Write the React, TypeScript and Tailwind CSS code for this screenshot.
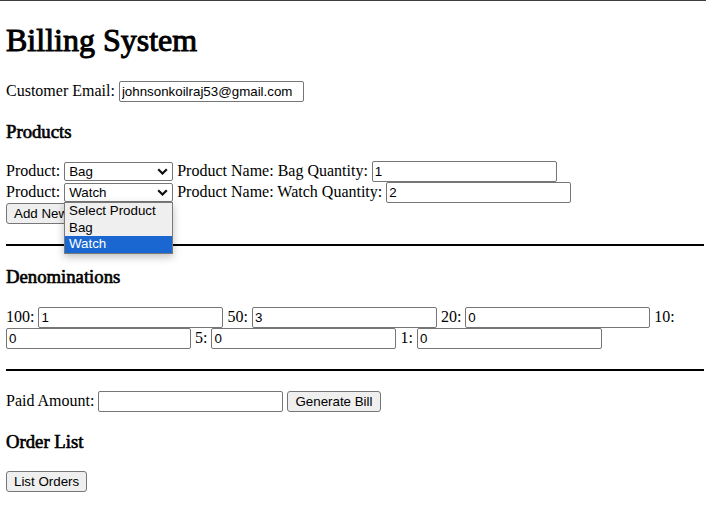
import React from "react";

const field =
  "inline-block align-baseline w-[185px] h-[21px] border border-[#767676] rounded-[2px] bg-white px-[2px] text-[13.333px] leading-[normal] text-black font-['Liberation_Sans',Arial,sans-serif]";

const btn =
  "inline-block align-baseline h-[21px] border border-[#767676] rounded-[3px] bg-[#efefef] px-[7px] text-[13.333px] leading-[normal] text-black font-['Liberation_Sans',Arial,sans-serif]";

// headings use regular glyph widths with a faux-bold stroke, like the screenshot
const h3 =
  "my-[18.72px] text-[18.72px] font-normal leading-[normal] [-webkit-text-stroke:0.65px_black]";

function ProductSelect({ value }: { value: string }) {
  return (
    <span className="relative inline-block align-baseline">
      <select
        value={value}
        onChange={() => {}}
        className="appearance-none block w-[109px] h-[19px] border border-[#767676] rounded-[2px] bg-white pl-[4px] text-[13.333px] leading-[normal] text-black font-['Liberation_Sans',Arial,sans-serif]"
      >
        <option value="">Select Product</option>
        <option value="Bag">Bag</option>
        <option value="Watch">Watch</option>
      </select>
      <svg
        className="pointer-events-none absolute right-[5px] top-[6px] w-[11px] h-[7px]"
        viewBox="0 0 11 7"
        fill="none"
        stroke="#111"
        strokeWidth={2.2}
      >
        <path d="M1.2 1.2l4.3 4.3 4.3-4.3" />
      </svg>
    </span>
  );
}

export default function App() {
  const denoms = [
    { label: "100", value: "1" },
    { label: "50", value: "3" },
    { label: "20", value: "0" },
    { label: "10", value: "0" },
    { label: "5", value: "0" },
    { label: "1", value: "0" },
  ];

  return (
    <div className="min-h-[529px] bg-white text-black font-['Liberation_Serif','Times_New_Roman',serif] text-[16px] leading-[normal]">
      <div className="h-px bg-[#3c3c3c]" />
      <div className="pl-[6px] pr-[2px] pb-[8px]">
        <h1 className="my-[21.44px] text-[32px] font-normal leading-[normal] [-webkit-text-stroke:1px_black]">
          Billing System
        </h1>

        <div>
          Customer Email:{" "}
          <input className={field} defaultValue="johnsonkoilraj53@gmail.com" />
        </div>

        <h3 className={h3}>Products</h3>

        <div className="relative">
          <div>
            Product: <ProductSelect value="Bag" /> Product Name: Bag Quantity:{" "}
            <input className={field} defaultValue="1" />
          </div>
          <div>
            Product: <ProductSelect value="Watch" /> Product Name: Watch Quantity:{" "}
            <input className={field} defaultValue="2" />
          </div>
          <button className={btn}>Add New Product</button>

          {/* open dropdown of the second select */}
          <div className="absolute left-[58px] top-[41px] w-[109px] border border-[#7a7a7a] bg-[#efefef] shadow-[0_3px_8px_rgba(0,0,0,0.25)] text-[13.333px] leading-[16.5px] font-['Liberation_Sans',Arial,sans-serif]">
            <div className="pl-[4px] h-[17px]">Select Product</div>
            <div className="pl-[4px] h-[16px]">Bag</div>
            <div className="pl-[4px] h-[17px] bg-[#1a67d2] text-white">Watch</div>
          </div>
        </div>

        <hr className="my-[20px] border-0 border-y border-black" />

        <h3 className={h3}>Denominations</h3>

        <div>
          {denoms.map((d) => (
            <React.Fragment key={d.label}>
              {d.label}: <input className={field} defaultValue={d.value} />{" "}
            </React.Fragment>
          ))}
        </div>

        <hr className="my-[20px] border-0 border-y border-black" />

        <div>
          Paid Amount: <input className={field} />{" "}
          <button className={btn}>Generate Bill</button>
        </div>

        <h3 className={h3}>Order List</h3>

        <button className={btn}>List Orders</button>
      </div>
    </div>
  );
}
